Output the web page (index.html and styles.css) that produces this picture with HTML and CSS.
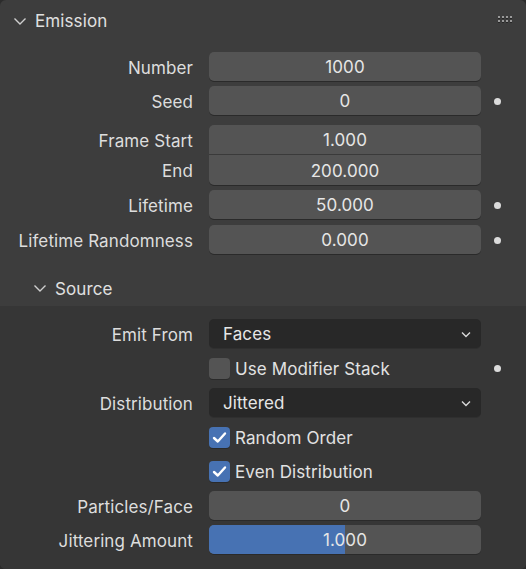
FILE: index.html
```html
<!DOCTYPE html>
<html>
<head>
<meta charset="utf-8">
<link rel="stylesheet" href="styles.css">
</head>
<body>
<div class="panel">
  <div class="header">
    <svg class="chev" width="14" height="10" viewBox="0 0 14 10"><path d="M1.5 2.5 L7 8 L12.5 2.5" fill="none" stroke="#cfcfcf" stroke-width="1.4"/></svg>
    <span class="title">Emission</span>
    <span class="grip"><i></i><i></i><i></i><i></i><i></i><i></i><i></i><i></i></span>
  </div>
  <div class="body">
    <div class="row r-number"><div class="label">Number</div><div class="field">1000</div><div class="side"></div></div>
    <div class="row r-seed"><div class="label">Seed</div><div class="field">0</div><div class="side"><span class="dot"></span></div></div>
    <div class="row r-fstart"><div class="label">Frame Start</div><div class="field top">1.000</div><div class="side"></div></div>
    <div class="row r-end"><div class="label">End</div><div class="field bottom">200.000</div><div class="side"></div></div>
    <div class="row r-life"><div class="label">Lifetime</div><div class="field">50.000</div><div class="side"><span class="dot"></span></div></div>
    <div class="row r-rand"><div class="label">Lifetime Randomness</div><div class="field">0.000</div><div class="side"><span class="dot"></span></div></div>
  </div>
  <div class="subheader">
    <svg class="chev" width="14" height="10" viewBox="0 0 14 10"><path d="M1.5 2.5 L7 8 L12.5 2.5" fill="none" stroke="#cfcfcf" stroke-width="1.4"/></svg>
    <span class="title">Source</span>
  </div>
  <div class="subbody">
    <div class="row s-emit"><div class="label">Emit From</div><div class="field menu"><span>Faces</span><svg width="10" height="7" viewBox="0 0 10 7"><path d="M1 1.5 L5 5.5 L9 1.5" fill="none" stroke="#d8d8d8" stroke-width="1.4"/></svg></div><div class="side"></div></div>
    <div class="row s-mod"><div class="label"></div><div class="check-wrap"><span class="box"></span><span class="ctext">Use Modifier Stack</span></div><div class="side"><span class="dot"></span></div></div>
    <div class="row s-dist"><div class="label">Distribution</div><div class="field menu"><span>Jittered</span><svg width="10" height="7" viewBox="0 0 10 7"><path d="M1 1.5 L5 5.5 L9 1.5" fill="none" stroke="#d8d8d8" stroke-width="1.4"/></svg></div><div class="side"></div></div>
    <div class="row s-rand"><div class="label"></div><div class="check-wrap"><span class="box on"><svg width="15" height="13" viewBox="0 0 15 13"><path d="M2 7 L5.8 10.5 L13 2.5" fill="none" stroke="#ffffff" stroke-width="2.4" stroke-linecap="round" stroke-linejoin="round"/></svg></span><span class="ctext">Random Order</span></div><div class="side"></div></div>
    <div class="row s-even"><div class="label"></div><div class="check-wrap"><span class="box on"><svg width="15" height="13" viewBox="0 0 15 13"><path d="M2 7 L5.8 10.5 L13 2.5" fill="none" stroke="#ffffff" stroke-width="2.4" stroke-linecap="round" stroke-linejoin="round"/></svg></span><span class="ctext">Even Distribution</span></div><div class="side"></div></div>
    <div class="row s-ppf"><div class="label">Particles/Face</div><div class="field">0</div><div class="side"></div></div>
    <div class="row s-jit"><div class="label">Jittering Amount</div><div class="field slider"><span class="fill" style="width:50%"></span><span class="val">1.000</span></div><div class="side"></div></div>
  </div>
</div>
</body>
</html>
```
FILE: styles.css
```css
html, body {
  margin: 0;
  padding: 0;
  background: #2c2c2c;
}
body {
  width: 526px;
  height: 569px;
  overflow: hidden;
  font-family: Inter, "Noto Sans", sans-serif;
  font-size: 17px;
  letter-spacing: 0.1px;
  color: #e2e2e2;
}
.panel {
  width: 526px;
  height: 569px;
  background: #3d3d3d;
  border-radius: 6px;
  overflow: hidden;
  display: flex;
  flex-direction: column;
}
.header {
  height: 40px;
  box-sizing: border-box;
  padding-top: 1px;
  display: flex;
  align-items: center;
  padding-left: 13px;
  position: relative;
}
.header .title {
  margin-left: 8px;
  color: #e0e0e0;
  padding-top: 1px;
}
.chev { display: block; }
.grip {
  position: absolute;
  left: 498px;
  top: 16px;
  display: grid;
  grid-template-columns: repeat(4, 2px);
  grid-auto-rows: 2px;
  gap: 2px 2px;
}
.grip i {
  display: block;
  width: 2px;
  height: 2px;
  background: #9a9a9a;
  box-shadow: 0 1px 0 #262626;
}
.body {
  padding-top: 12px;
  display: flex;
  flex-direction: column;
}
.row {
  height: 30px;
  display: flex;
  align-items: center;
}
.label {
  width: 193px;
  margin-right: 16px;
  text-align: right;
  color: #dddddd;
  white-space: nowrap;
  padding-top: 1px;
}
.field {
  width: 272px;
  height: 29px;
  box-sizing: border-box;
  padding-top: 1px;
  background: #545454;
  border-radius: 5px;
  box-shadow: 0 1px 0 #2a2a2a;
  display: flex;
  align-items: center;
  justify-content: center;
  color: #e6e6e6;
  align-self: flex-start;
}
.field.top {
  border-radius: 5px 5px 0 0;
  height: 30px;
  box-shadow: none;
  border-bottom: 1px solid #3a3a3a;
}
.field.bottom {
  border-radius: 0 0 5px 5px;
  height: 30px;
}
.side {
  flex: 1;
  display: flex;
  align-items: center;
}
.dot {
  width: 7px;
  height: 7px;
  border-radius: 50%;
  background: #dcdcdc;
  margin-left: 13px;
}
.r-seed { margin-top: 4px; }
.r-fstart { margin-top: 9px; }
.r-end { margin-top: 0; }
.r-life { margin-top: 5px; }
.r-rand { margin-top: 5px; }

.subheader {
  margin-top: 15px;
  height: 36px;
  display: flex;
  align-items: center;
  padding-left: 33px;
}
.subheader .title {
  margin-left: 8px;
  color: #e0e0e0;
  padding-top: 1px;
}
.subbody {
  flex: 1;
  background: #363636;
  padding-top: 13px;
  display: flex;
  flex-direction: column;
}
.field.menu {
  background: #282828;
  justify-content: space-between;
  padding: 1px 10px 0 14px;
  box-shadow: 0 1px 0 #2f2f2f;
}
.field.menu span { color: #e6e6e6; }
.check-wrap {
  width: 272px;
  display: flex;
  align-items: center;
}
.box {
  width: 21px;
  height: 21px;
  border-radius: 4px;
  background: #545454;
  box-shadow: 0 1px 0 #2a2a2a;
  display: flex;
  align-items: center;
  justify-content: center;
}
.box.on { background: #4772b3; }
.box svg { display: block; }
.ctext {
  margin-left: 5px;
  color: #e2e2e2;
  padding-top: 1px;
}
.s-mod { margin-top: 4px; }
.s-dist { margin-top: 5px; }
.s-rand { margin-top: 4px; }
.s-even { margin-top: 4px; }
.s-ppf { margin-top: 5px; }
.s-jit { margin-top: 4px; }
.field.slider {
  position: relative;
  overflow: hidden;
}
.slider .fill {
  position: absolute;
  left: 0;
  top: 0;
  bottom: 0;
  background: #4772b3;
}
.slider .val { position: relative; }
```
